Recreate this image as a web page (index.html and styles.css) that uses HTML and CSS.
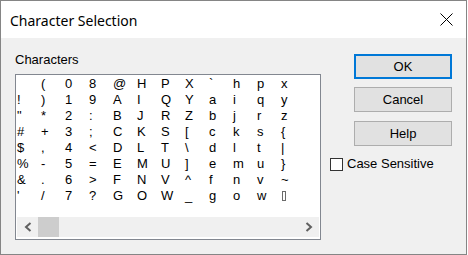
FILE: index.html
```html
<!DOCTYPE html>
<html lang="en">
<head>
    <meta charset="UTF-8">
    <title>Character Selection</title>
    <link rel="stylesheet" href="styles.css">
</head>
<body>
    <div class="window">
        <!-- Title Bar -->
        <div class="titlebar">
            <span class="title">Character Selection</span>
            <span class="close">
                <svg width="13" height="13" viewBox="0 0 13 13">
                    <path d="M0.5 0.5 L12.5 12.5 M12.5 0.5 L0.5 12.5" stroke="#000" stroke-width="1" fill="none"/>
                </svg>
            </span>
        </div>

        <div class="content">
            <!-- Character list -->
            <div class="left">
                <div class="label">Characters</div>
                <div class="charbox">
                    <div class="grid">
                        <span class="ch">&nbsp;</span><span class="ch">!</span><span class="ch">"</span><span class="ch">#</span><span class="ch">$</span><span class="ch">%</span><span class="ch">&amp;</span><span class="ch">'</span>
                        <span class="ch">(</span><span class="ch">)</span><span class="ch">*</span><span class="ch">+</span><span class="ch">,</span><span class="ch">-</span><span class="ch">.</span><span class="ch">/</span>
                        <span class="ch">0</span><span class="ch">1</span><span class="ch">2</span><span class="ch">3</span><span class="ch">4</span><span class="ch">5</span><span class="ch">6</span><span class="ch">7</span>
                        <span class="ch">8</span><span class="ch">9</span><span class="ch">:</span><span class="ch">;</span><span class="ch">&lt;</span><span class="ch">=</span><span class="ch">&gt;</span><span class="ch">?</span>
                        <span class="ch">@</span><span class="ch">A</span><span class="ch">B</span><span class="ch">C</span><span class="ch">D</span><span class="ch">E</span><span class="ch">F</span><span class="ch">G</span>
                        <span class="ch">H</span><span class="ch">I</span><span class="ch">J</span><span class="ch">K</span><span class="ch">L</span><span class="ch">M</span><span class="ch">N</span><span class="ch">O</span>
                        <span class="ch">P</span><span class="ch">Q</span><span class="ch">R</span><span class="ch">S</span><span class="ch">T</span><span class="ch">U</span><span class="ch">V</span><span class="ch">W</span>
                        <span class="ch">X</span><span class="ch">Y</span><span class="ch">Z</span><span class="ch">[</span><span class="ch">\</span><span class="ch">]</span><span class="ch">^</span><span class="ch">_</span>
                        <span class="ch">`</span><span class="ch">a</span><span class="ch">b</span><span class="ch">c</span><span class="ch">d</span><span class="ch">e</span><span class="ch">f</span><span class="ch">g</span>
                        <span class="ch">h</span><span class="ch">i</span><span class="ch">j</span><span class="ch">k</span><span class="ch">l</span><span class="ch">m</span><span class="ch">n</span><span class="ch">o</span>
                        <span class="ch">p</span><span class="ch">q</span><span class="ch">r</span><span class="ch">s</span><span class="ch">t</span><span class="ch">u</span><span class="ch">v</span><span class="ch">w</span>
                        <span class="ch">x</span><span class="ch">y</span><span class="ch">z</span><span class="ch">{</span><span class="ch">|</span><span class="ch">}</span><span class="ch">~</span><span class="ch"><span class="del-box"></span></span>
                    </div>

                    <!-- Horizontal scrollbar -->
                    <div class="hscroll">
                        <span class="arrow">
                            <svg width="8" height="10" viewBox="0 0 8 10">
                                <polyline points="6.5,1 2,5 6.5,9" stroke="#606060" stroke-width="2" fill="none"/>
                            </svg>
                        </span>
                        <span class="thumb"></span>
                        <span class="track"></span>
                        <span class="arrow">
                            <svg width="8" height="10" viewBox="0 0 8 10">
                                <polyline points="1.5,1 6,5 1.5,9" stroke="#606060" stroke-width="2" fill="none"/>
                            </svg>
                        </span>
                    </div>
                </div>
            </div>

            <!-- Buttons -->
            <div class="right">
                <button class="btn default">OK</button>
                <button class="btn">Cancel</button>
                <button class="btn btn-help">Help</button>
                <label class="check-row">
                    <span class="checkbox"></span>
                    <span>Case Sensitive</span>
                </label>
            </div>
        </div>
    </div>
</body>
</html>
```

FILE: styles.css
```css
/* Global */
body {
    margin: 0;
    background-color: #fff;
    font-family: "Liberation Sans", Arial, sans-serif;
    font-size: 13px;
    color: #000;
}

/* Window frame */
.window {
    width: 467px;
    height: 255px;
    box-sizing: border-box;
    border: 1px solid #858585;
    background-color: #f0f0f0;
    display: flex;
    flex-direction: column;
}

/* Title bar */
.titlebar {
    height: 37px;
    flex: none;
    background-color: #fff;
    display: flex;
    align-items: center;
    justify-content: space-between;
    padding-left: 9px;
}

.title {
    font-family: "Noto Sans", sans-serif;
    font-size: 14px;
    padding-top: 1px;
}

.close {
    display: flex;
    margin-right: 13px;
}

/* Content */
.content {
    display: flex;
    gap: 9px;
    padding: 14px 14px 0 14px;
}

.left {
    width: 306px;
}

.label {
    line-height: 16px;
    margin-bottom: 6px;
}

/* Character box */
.charbox {
    height: 166px;
    box-sizing: border-box;
    border: 1px solid #828790;
    background-color: #fff;
    padding: 1px;
    display: flex;
    flex-direction: column;
}

.grid {
    flex: 1;
    display: grid;
    grid-template-rows: repeat(8, 16px);
    grid-auto-flow: column;
    grid-auto-columns: 24px;
    line-height: 16px;
}

.ch {
    white-space: pre;
}

.del-box {
    display: inline-block;
    width: 2px;
    height: 8px;
    border: 1px solid #6b6b6b;
    vertical-align: -1px;
    margin-left: 1px;
}

/* Scrollbar */
.hscroll {
    height: 20px;
    margin-bottom: 1px;
    display: flex;
    background-color: #f0f0f0;
}

.arrow {
    width: 21px;
    display: flex;
    align-items: center;
    justify-content: center;
}

.thumb {
    width: 21px;
    background-color: #cdcdcd;
}

.track {
    flex: 1;
}

/* Right column */
.right {
    width: 122px;
    padding-top: 2px;
    display: flex;
    flex-direction: column;
    align-items: flex-end;
}

.btn {
    width: 98px;
    height: 25px;
    box-sizing: border-box;
    border: 1px solid #adadad;
    background-color: #e1e1e1;
    font-family: inherit;
    font-size: 13px;
    color: #000;
    padding: 0;
    margin: 0;
}

.btn.default {
    border: 2px solid #0078d7;
}

.btn + .btn {
    margin-top: 8px;
}

.btn.btn-help {
    margin-top: 9px;
}

.check-row {
    align-self: stretch;
    display: flex;
    align-items: center;
    line-height: 16px;
    margin-top: 10px;
}

.checkbox {
    width: 13px;
    height: 13px;
    box-sizing: border-box;
    border: 1px solid #333;
    background-color: #fff;
    margin-right: 4px;
}
```
